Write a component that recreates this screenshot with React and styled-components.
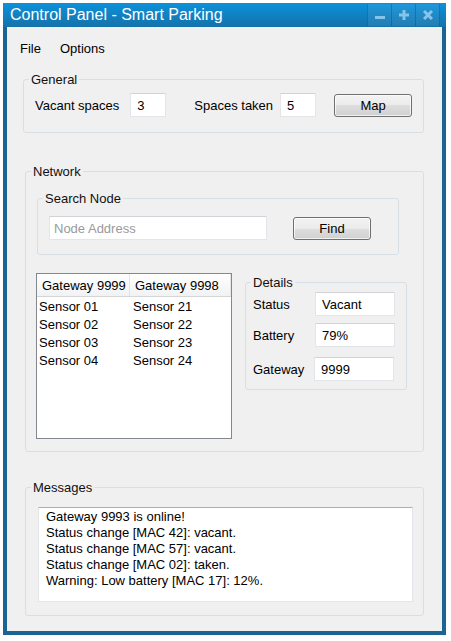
import { Fragment } from 'react';
import styled, { createGlobalStyle } from 'styled-components';

const GlobalStyle = createGlobalStyle`
  body {
    margin: 0;
    background: #ffffff;
    font-family: "Liberation Sans", Arial, sans-serif;
  }
`;

const Window = styled.div`
  margin: 3px 0 0 3px;
  width: 443px;
  box-sizing: border-box;
  background: #1b6594;
  padding: 0 4px 4px 4px;
  display: flex;
  flex-direction: column;
`;

const TitleBar = styled.div`
  height: 24px;
  margin: 0 -4px;
  padding-left: 7px;
  display: flex;
  align-items: center;
  background: linear-gradient(#0c91da, #1572aa);
  color: #ffffff;
  font-size: 16px;
`;

const TitleText = styled.span`
  margin-top: -1px;
`;

const TitleButtons = styled.div`
  margin-left: auto;
  margin-right: 6px;
  align-self: flex-start;
  margin-top: 1px;
  display: flex;
`;

const TitleButton = styled.div`
  width: 23px;
  height: 22px;
  display: flex;
  align-items: center;
  justify-content: center;
  background: rgba(255, 255, 255, 0.07);
  border-left: 1px solid rgba(0, 40, 80, 0.25);
  &:last-child {
    border-right: 1px solid rgba(0, 40, 80, 0.25);
  }
`;

const Client = styled.div`
  height: 604px;
  background: #f0f0f0;
  box-sizing: border-box;
  padding: 0 18px 0 16px;
  display: flex;
  flex-direction: column;
  font-size: 13px;
  color: #000;
  white-space: nowrap;
`;

const MenuBar = styled.div`
  display: flex;
  gap: 19px;
  padding-top: 14px;
  margin-left: -3px;
  line-height: 15px;
`;

const Group = styled.fieldset`
  margin: ${p => p.$mt || 0}px 0 0 ${p => p.$ml || 0}px;
  padding: 0;
  border: 1px solid #d5dfe5;
  border-radius: 3px;
  min-width: 0;
  width: ${p => (p.$w ? `${p.$w}px` : 'auto')};
  box-sizing: border-box;
  flex-shrink: 0;
`;

const GroupBody = styled.div`
  padding: ${p => p.$pad};
`;

const Legend = styled.legend`
  margin-left: 5px;
  padding: 0 2px;
  line-height: 15px;
  font-size: 13px;
  color: #111;
`;

const Row = styled.div`
  display: flex;
  align-items: ${p => p.$align || 'center'};
  margin-top: ${p => p.$mt || 0}px;
`;

const Label = styled.span`
  margin-left: ${p => p.$ml || 0}px;
`;

const TextBox = styled.div`
  width: ${p => p.$w}px;
  height: 24px;
  box-sizing: border-box;
  margin-left: ${p => p.$ml || 0}px;
  background: #ffffff;
  border: 1px solid #e2e6ea;
  border-top-color: #d0d4d8;
  padding-left: ${p => p.$pl || 6}px;
  display: flex;
  align-items: center;
  color: ${p => (p.$placeholder ? '#9a9a9a' : '#000')};
`;

const Button = styled.div`
  width: 78px;
  height: 23px;
  box-sizing: border-box;
  margin-left: ${p => p.$ml || 0}px;
  border: 1px solid #707070;
  border-radius: 3px;
  background: linear-gradient(#f3f3f3 0%, #ebebeb 50%, #dedede 50%, #d0d0d0 100%);
  box-shadow: inset 0 0 0 1px rgba(255, 255, 255, 0.7);
  display: flex;
  align-items: center;
  justify-content: center;
`;

const List = styled.div`
  width: 196px;
  height: 166px;
  box-sizing: border-box;
  margin-left: -1px;
  border: 1px solid #828790;
  background: #ffffff;
  flex-shrink: 0;
`;

const ListHeader = styled.div`
  display: grid;
  grid-template-columns: 93px 1fr;
  height: 23px;
  box-sizing: border-box;
  border-bottom: 1px solid #d5d5d5;
  background: linear-gradient(#ffffff, #f1f2f4);
`;

const HeaderCell = styled.div`
  padding-left: 5px;
  display: flex;
  align-items: center;
  border-right: 1px solid #e3e5e8;
`;

const ListBody = styled.div`
  display: grid;
  grid-template-columns: 94px 1fr;
  padding-top: 1px;
  line-height: 18px;
`;

const ListCell = styled.div`
  padding-left: 2px;
`;

const DetailLabel = styled.span`
  width: ${p => p.$w || 62}px;
`;

const MessageBox = styled.div`
  width: 375px;
  height: 95px;
  box-sizing: border-box;
  background: #ffffff;
  border: 1px solid #e2e6ea;
  border-top-color: #abadb3;
  padding: 1px 0 0 7px;
  line-height: 16px;
`;

const sensors = [
  ['Sensor 01', 'Sensor 21'],
  ['Sensor 02', 'Sensor 22'],
  ['Sensor 03', 'Sensor 23'],
  ['Sensor 04', 'Sensor 24'],
];

const messages = [
  'Gateway 9993 is online!',
  'Status change [MAC 42]: vacant.',
  'Status change [MAC 57]: vacant.',
  'Status change [MAC 02]: taken.',
  'Warning: Low battery [MAC 17]: 12%.',
];

const iconColor = '#86c4ea';

export default function App() {
  return (
    <>
      <GlobalStyle />
      <Window>
        <TitleBar>
          <TitleText>Control Panel - Smart Parking</TitleText>
          <TitleButtons>
            <TitleButton>
              <svg width="10" height="10" viewBox="0 0 10 10">
                <rect x="0" y="6" width="10" height="3" fill={iconColor} />
              </svg>
            </TitleButton>
            <TitleButton>
              <svg width="10" height="10" viewBox="0 0 10 10">
                <rect x="0" y="3.5" width="10" height="3" fill={iconColor} />
                <rect x="3.5" y="0" width="3" height="10" fill={iconColor} />
              </svg>
            </TitleButton>
            <TitleButton>
              <svg width="10" height="10" viewBox="0 0 10 10">
                <path d="M1 1 L9 9 M9 1 L1 9" stroke={iconColor} strokeWidth="3" />
              </svg>
            </TitleButton>
          </TitleButtons>
        </TitleBar>
        <Client>
          <MenuBar>
            <span>File</span>
            <span>Options</span>
          </MenuBar>

          <Group $mt={16}>
            <Legend>General</Legend>
            <GroupBody $pad="6px 11px 15px 11px">
              <Row>
                <Label>Vacant spaces</Label>
                <TextBox $w={36} $ml={11}>3</TextBox>
                <Label $ml={28}>Spaces taken</Label>
                <TextBox $w={36} $ml={7}>5</TextBox>
                <Button $ml={18}>Map</Button>
              </Row>
            </GroupBody>
          </Group>

          <Group $mt={31} $ml={2}>
            <Legend>Network</Legend>
            <GroupBody $pad="12px 11px 12px 11px">
              <Group $w={362}>
                <Legend>Search Node</Legend>
                <GroupBody $pad="10px 11px 14px 11px">
                  <Row>
                    <TextBox $w={218} $pl={4} $placeholder>Node Address</TextBox>
                    <Button $ml={26}>Find</Button>
                  </Row>
                </GroupBody>
              </Group>
              <Row $align="flex-start" $mt={18}>
                <List>
                  <ListHeader>
                    <HeaderCell>Gateway 9999</HeaderCell>
                    <HeaderCell>Gateway 9998</HeaderCell>
                  </ListHeader>
                  <ListBody>
                    {sensors.map(([a, b]) => (
                      <Fragment key={a}>
                        <ListCell>{a}</ListCell>
                        <ListCell>{b}</ListCell>
                      </Fragment>
                    ))}
                  </ListBody>
                </List>
                <Group $w={162} $mt={2} $ml={13}>
                  <Legend>Details</Legend>
                  <GroupBody $pad="2px 11px 8px 7px">
                    <Row>
                      <DetailLabel>Status</DetailLabel>
                      <TextBox $w={80}>Vacant</TextBox>
                    </Row>
                    <Row $mt={7}>
                      <DetailLabel>Battery</DetailLabel>
                      <TextBox $w={80}>79%</TextBox>
                    </Row>
                    <Row $mt={10}>
                      <DetailLabel $w={61}>Gateway</DetailLabel>
                      <TextBox $w={80}>9999</TextBox>
                    </Row>
                  </GroupBody>
                </Group>
              </Row>
            </GroupBody>
          </Group>

          <Group $mt={28} $ml={2}>
            <Legend>Messages</Legend>
            <GroupBody $pad="12px 11px 13px 12px">
              <MessageBox>
                {messages.map(m => (
                  <div key={m}>{m}</div>
                ))}
              </MessageBox>
            </GroupBody>
          </Group>
        </Client>
      </Window>
    </>
  );
}
